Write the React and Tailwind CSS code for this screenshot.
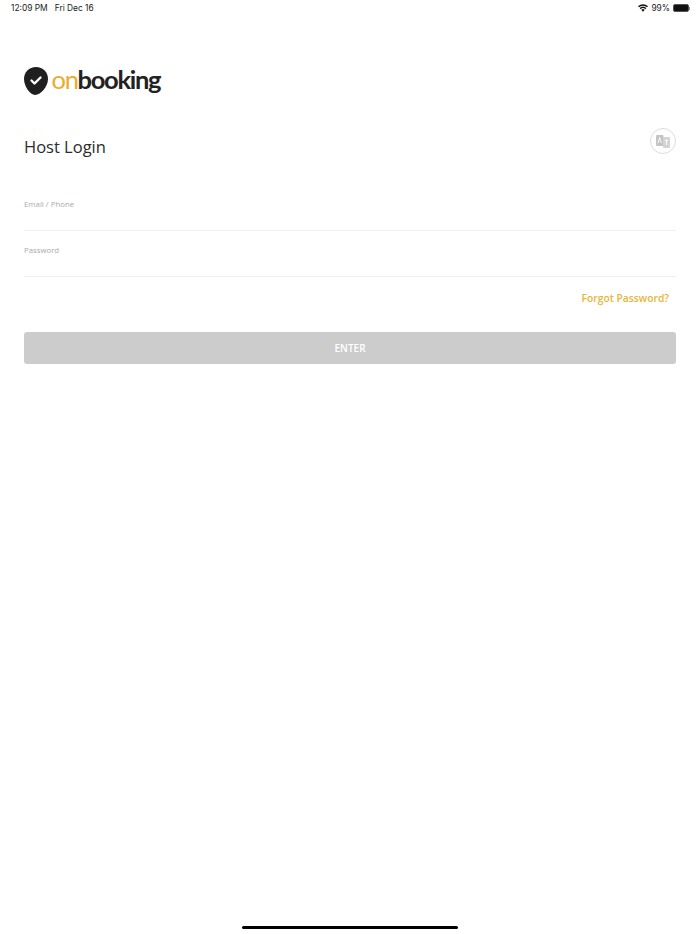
const openSans = { fontFamily: '"Open Sans", sans-serif' };

function StatusBar() {
  return (
    <div className="h-[17px] flex items-center justify-between pl-[11px] pr-[10px] text-[8.4px] text-[#222] font-['Inter',sans-serif]">
      <div className="flex gap-[7px]">
        <span>12:09 PM</span>
        <span>Fri Dec 16</span>
      </div>
      <div className="flex items-center gap-[3px]">
        <svg width="10" height="8" viewBox="0 0 20 15" fill="#111">
          <path d="M10 15 L6.6 11.2 A5 5 0 0 1 13.4 11.2 Z" />
          <path d="M5.3 9.8 L3.3 7.6 A10 10 0 0 1 16.7 7.6 L14.7 9.8 A7 7 0 0 0 5.3 9.8 Z" />
          <path d="M2 6.2 L0 4 A15 15 0 0 1 20 4 L18 6.2 A12 12 0 0 0 2 6.2 Z" />
        </svg>
        <span>99%</span>
        <div className="flex items-center">
          <div className="w-[16px] h-[8px] rounded-[2px] border border-[#555] bg-[#111]" />
          <div className="w-[1px] h-[3px] bg-[#888]" />
        </div>
      </div>
    </div>
  );
}

function Logo() {
  return (
    <div className="flex items-center h-[30px]">
      <svg width="24" height="28" viewBox="0 0 24 28">
        <path
          d="M12 0 C19 0 24 5 24 12 C24 19 17 28 11 28 C6 28 0 19 0 12 C0 5 5 0 12 0 Z"
          fill="#1f1f1f"
        />
        <path
          d="M7.5 13.5 L10.5 16.5 L16.5 10.5"
          fill="none"
          stroke="#fff"
          strokeWidth="2.4"
          strokeLinecap="round"
          strokeLinejoin="round"
        />
      </svg>
      <div className="ml-[3.5px] text-[25.5px] font-bold tracking-[-1.3px] leading-none font-['Lato',sans-serif] pb-[2px]">
        <span className="text-[#e8ad2e] font-normal">on</span>
        <span className="text-[#222]">booking</span>
      </div>
    </div>
  );
}

function Field({ label }) {
  return (
    <div className="h-[46px] border-b border-[#f0f0f0] pt-[13px]">
      <div className="text-[7.8px] leading-[12px] text-[#aaa]">{label}</div>
    </div>
  );
}

export default function App() {
  return (
    <div className="relative w-[700px] h-[934px] bg-white overflow-hidden" style={openSans}>
      <StatusBar />
      <div className="px-[24px]">
        <div className="mt-[49px]">
          <Logo />
        </div>
        <div className="mt-[32px] flex items-start justify-between">
          <h1 className="text-[16.5px] leading-[24px] mt-[7px] text-[#2b2b2b]">Host Login</h1>
          <div className="w-[26px] h-[26px] rounded-full border border-[#ddd] flex items-center justify-center">
            <svg width="16" height="15" viewBox="0 0 16 15">
              <rect x="1" y="1" width="7.5" height="11" rx="1" fill="#c4c4c4" />
              <rect x="8" y="3" width="7" height="11" rx="1" fill="#d4d4d4" />
              <path d="M3 9 L4.7 3.5 L6.4 9" fill="none" stroke="#fff" strokeWidth="0.9" />
              <path d="M9.8 6.5 H13.2 M11.5 5.5 V11" fill="none" stroke="#fff" strokeWidth="0.9" />
            </svg>
          </div>
        </div>
        <div className="mt-[26px]">
          <Field label="Email / Phone" />
          <Field label="Password" />
        </div>
        <div className="mt-[13px] pr-[7px] text-right text-[10.3px] leading-[16px] font-semibold text-[#e8b438]">
          Forgot Password?
        </div>
        <button className="mt-[26px] w-full h-[32px] rounded-[3px] bg-[#cccccc] text-white text-[10px] font-semibold">
          ENTER
        </button>
      </div>
      <div className="absolute bottom-[5px] left-[242px] w-[216px] h-[3px] rounded-full bg-black" />
    </div>
  );
}
